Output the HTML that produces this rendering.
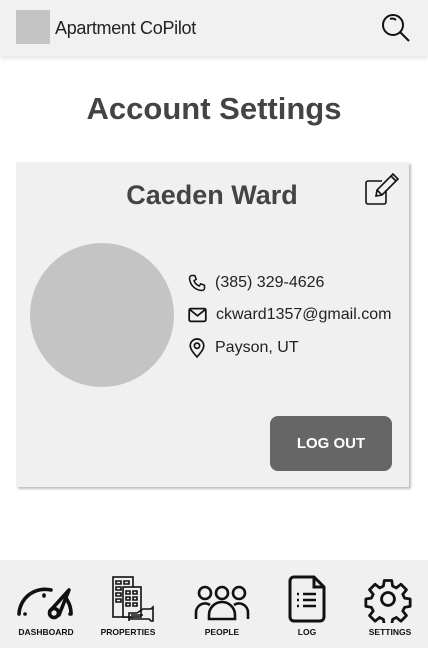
<!DOCTYPE html>
<html><head><meta charset="utf-8"><style>
*{margin:0;padding:0;box-sizing:border-box}
body{width:428px;height:648px;background:#fff;font-family:"Liberation Sans",sans-serif;position:relative;overflow:hidden;color:#222}
.hdr{position:absolute;left:0;top:0;width:428px;height:56px;background:#f1f1f1;box-shadow:0 2px 5px rgba(0,0,0,.12)}
.logo{position:absolute;left:16px;top:10px;width:34px;height:34px;background:#c4c4c4}
.brand{position:absolute;left:55px;top:18px;font-size:18px;color:#222;letter-spacing:-0.3px}
h1{position:absolute;left:0;width:428px;top:91px;text-align:center;font-size:31px;font-weight:bold;color:#444}
.card{position:absolute;left:16px;top:162px;width:393px;height:325px;background:#f0f0f0;box-shadow:2px 2px 2px rgba(0,0,0,.25)}
.name{position:absolute;left:0;width:424px;top:180px;text-align:center;font-size:27px;font-weight:bold;color:#444}
.av{position:absolute;left:30px;top:243px;width:144px;height:144px;border-radius:50%;background:#c4c4c4}
.row{position:absolute;left:188px;font-size:16px;color:#222;display:flex;align-items:center}
.row svg{margin-right:9px}
.btn{position:absolute;left:270px;top:416px;width:122px;height:55px;background:#666;border-radius:8px;color:#fff;font-weight:bold;font-size:15px;text-align:center;line-height:56px}
.nav{position:absolute;left:0;top:560px;width:428px;height:88px;background:#f0f0f0}
.nl{position:absolute;top:627px;font-size:8.5px;font-weight:bold;color:#111;text-align:center;width:80px}
</style></head><body>
<div class="hdr"></div>
<div class="logo"></div>
<div class="brand">Apartment CoPilot</div>
<svg style="position:absolute;left:380px;top:12px" width="32" height="32" viewBox="0 0 32 32" fill="none" stroke="#111" stroke-width="2"><circle cx="13" cy="13" r="10"/><path d="M20 20 L29 29"/><path d="M10 7 a6 6 0 0 1 6 1" /></svg>
<h1>Account Settings</h1>
<div class="card"></div>
<div class="name">Caeden Ward</div>
<svg style="position:absolute;left:364px;top:172px" width="36" height="34" viewBox="0 0 36 34" fill="none" stroke="#111" stroke-width="1.6"><path d="M18 9 H4 a2 2 0 0 0 -2 2 V30 a2 2 0 0 0 2 2 H20 a2 2 0 0 0 2 -2 V18"/><path d="M12 24 L13 18 L29 2 L34 7 L18 23 Z M27 4 L32 9 M13 18 L18 23"/></svg>
<div class="av"></div>
<div class="row" style="top:274px"><svg width="18" height="18" viewBox="0 0 24 24" fill="none" stroke="#111" stroke-width="2"><path d="M5 2 L9 2 L11 7 L8 9 C9 12 12 15 15 16 L17 13 L22 15 L22 19 C22 21 20 22 18 22 C9 21 3 15 2 6 C2 4 3 2 5 2 Z"/></svg>(385) 329-4626</div>
<div class="row" style="top:306px"><svg width="19" height="16" viewBox="0 0 24 20" fill="none" stroke="#111" stroke-width="2.2"><rect x="1.5" y="2" width="21" height="16" rx="2"/><path d="M2 3 L12 11 L22 3"/></svg>ckward1357@gmail.com</div>
<div class="row" style="top:338px"><svg width="18" height="20" viewBox="0 0 24 26" fill="none" stroke="#111" stroke-width="2.2"><path d="M12 25 C6 18 3 14 3 10 a9 9 0 0 1 18 0 c0 4 -3 8 -9 15 Z"/><circle cx="12" cy="10" r="3.5"/></svg>Payson, UT</div>
<div class="btn">LOG OUT</div>
<div class="nav"></div>
<svg style="position:absolute;left:15px;top:584px" width="60" height="36" viewBox="0 0 60 36" fill="none" stroke="#111" stroke-width="3.6" stroke-linecap="round"><path d="M4 30 A26 26 0 0 1 36 6"/><path d="M50 13 A26 26 0 0 1 56 30"/><path d="M29 11 v1 M10 30 h0.1 M55 30 h0.1"/><path d="M35 27 L54 6 L44 31" stroke-linejoin="round"/><circle cx="39" cy="29" r="4.5"/></svg>
<svg style="position:absolute;left:111px;top:575px" width="45" height="48" viewBox="0 0 45 48" fill="none" stroke="#111" stroke-width="1.6"><rect x="2" y="2" width="20" height="40"/><rect x="12" y="12" width="18" height="30" fill="#f0f0f0"/><path d="M5 6h5v3H5zM13 6h5v3h-5zM5 12h5v3H5zM5 18h5v3H5zM5 24h5v3H5zM15 16h4v3h-4zM22 16h4v3h-4zM15 22h4v3h-4zM22 22h4v3h-4zM15 28h4v3h-4zM22 28h4v3h-4z"/><path d="M18 46 V38 h8 l6 -4 h8 l2 -2 v14 h-2 l-2 -2 H18 M20 40 h12"/></svg>
<svg style="position:absolute;left:194px;top:585px" width="56" height="36" viewBox="0 0 56 36" fill="none" stroke="#111" stroke-width="2.6"><circle cx="11" cy="8" r="6"/><circle cx="28" cy="8" r="6"/><circle cx="45" cy="8" r="6"/><path d="M2 34 V28 a9 9 0 0 1 14 -8"/><path d="M54 34 V28 a9 9 0 0 0 -14 -8"/><path d="M15 34 V30 a13 13 0 0 1 26 0 V34 Z"/></svg>
<svg style="position:absolute;left:288px;top:575px" width="38" height="48" viewBox="0 0 38 48" fill="none" stroke="#111" stroke-width="3"><path d="M6 2 H26 L36 12 V42 a4 4 0 0 1 -4 4 H6 a4 4 0 0 1 -4 -4 V6 a4 4 0 0 1 4 -4 Z"/><path d="M26 2 V12 H36" /><path d="M9 19h2M15 19h13M9 25h2M15 25h13M9 31h2M15 31h13" stroke-width="2.5"/></svg>
<svg style="position:absolute;left:364px;top:575px" width="48" height="48" viewBox="-3 -3 52 52" fill="none" stroke="#111" stroke-width="3" stroke-linejoin="round"><path d="M19 3h8l1 6 4 2 5-4 6 6-4 5 2 4 6 1v8l-6 1-2 4 4 5-6 6-5-4-4 2-1 6h-8l-1-6-4-2-5 4-6-6 4-5-2-4-6-1v-8l6-1 2-4-4-5 6-6 5 4 4-2z"/><circle cx="23" cy="23" r="7"/></svg>
<div class="nl" style="left:6px">DASHBOARD</div>
<div class="nl" style="left:88px">PROPERTIES</div>
<div class="nl" style="left:182px">PEOPLE</div>
<div class="nl" style="left:267px">LOG</div>
<div class="nl" style="left:350px">SETTINGS</div>
</body></html>
